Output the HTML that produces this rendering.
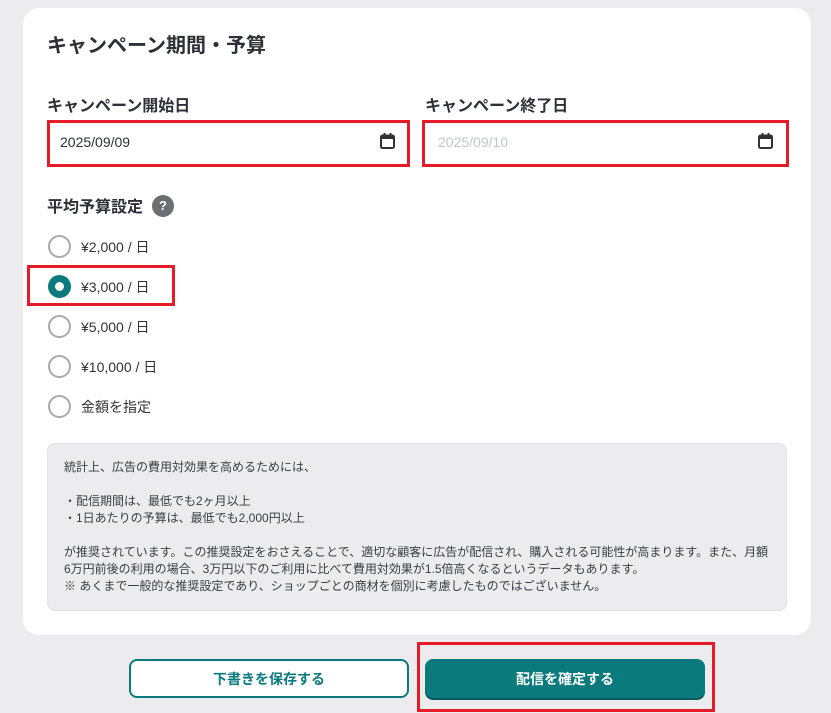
<!DOCTYPE html>
<html><head><meta charset="utf-8"><style>
*{margin:0;padding:0;box-sizing:border-box}
html,body{width:831px;height:713px;overflow:hidden}
body{background:#ececef;font-family:"Liberation Sans","Noto Sans CJK JP",sans-serif;color:#2e3038;position:relative}
.card{position:absolute;left:23px;top:8px;width:788px;height:627px;background:#fff;border-radius:16px}
.abs{position:absolute}
h1{position:absolute;left:47px;top:29px;font-size:20px;font-weight:bold}
.lbl{position:absolute;font-size:16px;font-weight:bold}
.red{position:absolute;border:3px solid #e51b2a}
.inp{position:absolute;font-size:14px;background:#fff}
.cal{position:absolute}
.rad{position:absolute;left:48px;width:23px;height:23px;border:2px solid #a8a9ae;border-radius:50%}
.rt{position:absolute;left:81px;font-size:14px;color:#333}
.info{position:absolute;left:47px;top:443px;width:740px;height:168px;background:#ececef;border-radius:8px;border:1px solid #e2e2e6;font-size:12px;line-height:17px;color:#3a3c44;padding:15px 0 0 16px}
.btn{position:absolute;top:659px;width:280px;height:39px;border-radius:8px;font-size:14px;font-weight:bold;text-align:center;line-height:37px}
</style></head><body>
<div class="card"></div>
<h1>キャンペーン期間・予算</h1>
<div class="lbl" style="left:47px;top:92px">キャンペーン開始日</div>
<div class="lbl" style="left:425px;top:92px">キャンペーン終了日</div>
<div class="red" style="left:47px;top:120px;width:363px;height:47px"></div>
<div class="inp" style="left:60px;top:134px">2025/09/09</div>
<svg class="cal" style="left:380px;top:133px" width="15" height="16" viewBox="0 0 15 16"><rect x="1" y="2.5" width="13" height="12.5" rx="1.5" fill="none" stroke="#333" stroke-width="2"/><rect x="1" y="3" width="13" height="3" fill="#333"/><rect x="3.5" y="0" width="2" height="3" fill="#333"/><rect x="9.5" y="0" width="2" height="3" fill="#333"/></svg>
<div class="red" style="left:422px;top:120px;width:367px;height:47px"></div>
<div class="inp" style="left:438px;top:134px;color:#c4c6ce">2025/09/10</div>
<svg class="cal" style="left:758px;top:133px" width="15" height="16" viewBox="0 0 15 16"><rect x="1" y="2.5" width="13" height="12.5" rx="1.5" fill="none" stroke="#333" stroke-width="2"/><rect x="1" y="3" width="13" height="3" fill="#333"/><rect x="3.5" y="0" width="2" height="3" fill="#333"/><rect x="9.5" y="0" width="2" height="3" fill="#333"/></svg>
<div class="lbl" style="left:47px;top:193px">平均予算設定</div>
<div class="abs" style="left:152px;top:195px;width:22px;height:22px;border-radius:50%;background:#6d6e74;color:#fff;font-size:13px;font-weight:bold;text-align:center;line-height:22px">?</div>
<div class="rad" style="top:235px"></div><div class="rt" style="top:237px">¥2,000 / 日</div>
<div class="red" style="left:27px;top:265px;width:148px;height:41px"></div>
<div class="rad" style="top:275px;border:7px solid #0b7a7d;background:#fff"></div><div class="rt" style="top:277px">¥3,000 / 日</div>
<div class="rad" style="top:315px"></div><div class="rt" style="top:317px">¥5,000 / 日</div>
<div class="rad" style="top:355px"></div><div class="rt" style="top:357px">¥10,000 / 日</div>
<div class="rad" style="top:395px"></div><div class="rt" style="top:397px">金額を指定</div>
<div class="info">統計上、広告の費用対効果を高めるためには、<br><br>・配信期間は、最低でも2ヶ月以上<br>・1日あたりの予算は、最低でも2,000円以上<br><br>が推奨されています。この推奨設定をおさえることで、適切な顧客に広告が配信され、購入される可能性が高まります。また、月額<br>6万円前後の利用の場合、3万円以下のご利用に比べて費用対効果が1.5倍高くなるというデータもあります。<br>※ あくまで一般的な推奨設定であり、ショップごとの商材を個別に考慮したものではございません。</div>
<div class="btn" style="left:129px;background:#fff;border:2px solid #0b7a7d;color:#0b7a7d">下書きを保存する</div>
<div class="red" style="left:417px;top:642px;width:298px;height:70px"></div>
<div class="btn" style="left:425px;background:#0b7a7d;color:#fff;box-shadow:0 2px 0 #075a5c;line-height:40px">配信を確定する</div>
</body></html>
